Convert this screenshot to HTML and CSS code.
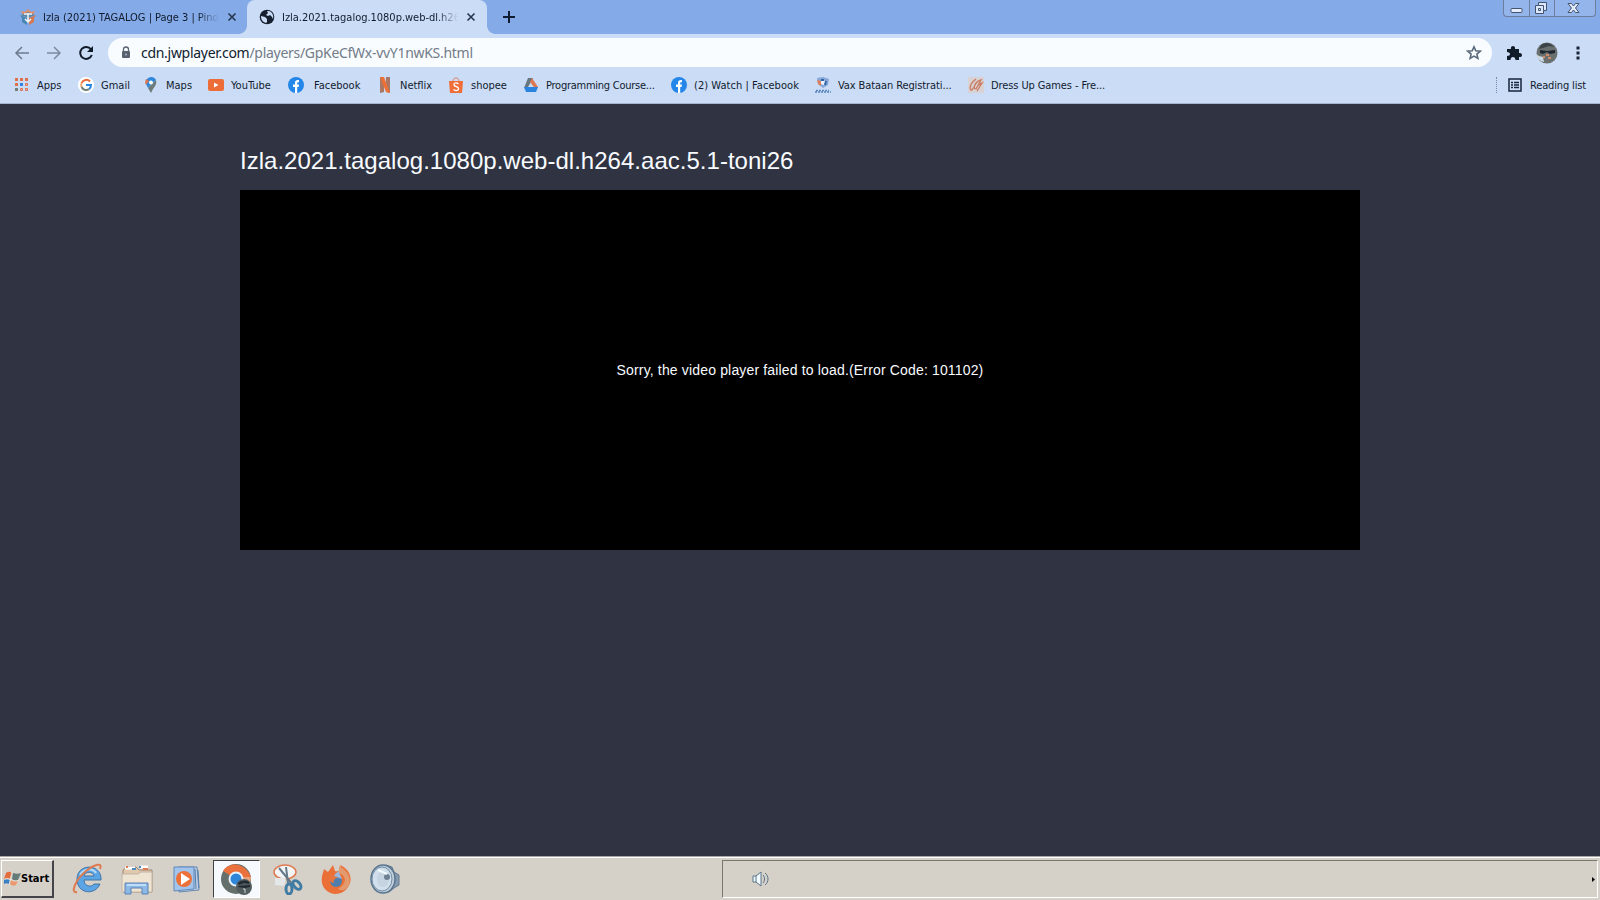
FILE: index.html
```html
<!DOCTYPE html>
<html lang="en">
<head>
    <meta charset="UTF-8">
    <title>Izla.2021.tagalog.1080p.web-dl.h264.aac.5.1-toni26</title>
    <link rel="stylesheet" href="styles.css">
</head>
<body>
    <div class="tabstrip">
        <div class="tab">
            <svg class="tab-icon" width="16" height="16" viewBox="0 0 16 16"><path d="M1 2l4 1 3-3 3 3 4-1-2 4H3z" fill="#e58b60"/><path d="M0 6l7 3v7l-5-3V9z" fill="#4687b3"/><path d="M16 6L9 9v7l5-3V9z" fill="#d57852"/><path d="M1 6l7-3 7 3-7 3z" fill="#5f87a6"/><path d="M4 5h8M8 4v9M5 10l3 3 3-3" stroke="#f1f3f5" stroke-width="1.500" fill="none"/></svg>
            <span class="tab-title">Izla (2021) TAGALOG | Page 3 | Pino</span>
            <svg class="close" width="10" height="10" viewBox="0 0 10 10"><path d="M1.500 1.500l7 7m0-7l-7 7" stroke="#26364f" stroke-width="1.600"/></svg>
        </div>
        <div class="tab active">
            <svg class="tab-icon" width="16" height="16" viewBox="0 0 16 16"><circle cx="8" cy="8" r="7.300" fill="#16202f"/><path d="M2 7l4 1 2 2v3l-1 1C4 13 2 11 2 7zM8 2l1 2-2 2 2 1 2-1 2 2 1 2c1-4-1-7-4-8z" fill="#cbdcf6"/></svg>
            <span class="tab-title">Izla.2021.tagalog.1080p.web-dl.h26</span>
            <svg class="close" width="10" height="10" viewBox="0 0 10 10"><path d="M1.500 1.500l7 7m0-7l-7 7" stroke="#26364f" stroke-width="1.600"/></svg>
        </div>
        <svg class="new-tab" width="12" height="12" viewBox="0 0 12 12"><path d="M6 0v12M0 6h12" stroke="#111c30" stroke-width="2"/></svg>
        <div class="window-buttons">
            <span><svg width="13" height="14" viewBox="0 0 13 14"><rect x="1" y="7.500" width="11" height="4" rx="1" fill="#e4edfb" stroke="#44546f"/></svg></span>
            <span><svg width="14" height="14" viewBox="0 0 14 14"><path d="M4.500 1.500h8v8h-3v3h-8v-8h3z" fill="#dce8fb" stroke="#44546f"/><path d="M4.500 4.500h5v5M4.500 7.500h2v2h-2z" fill="none" stroke="#44546f"/></svg></span>
            <span><svg width="13" height="14" viewBox="0 0 13 14"><path d="M1 2.500h3.500l2 2.500 2-2.500H12L8.500 7l3.500 4.500H8.500l-2-2.500-2 2.500H1L4.500 7z" fill="#e4edfb" stroke="#44546f"/></svg></span>
        </div>
    </div>

    <div class="toolbar">
        <svg class="back" width="16" height="16" viewBox="0 0 16 16"><path d="M15 8H2m6-6L2 8l6 6" fill="none" stroke="#6e7a8e" stroke-width="1.500"/></svg>
        <svg class="forward" width="16" height="16" viewBox="0 0 16 16"><path d="M1 8h13M8 2l6 6-6 6" fill="none" stroke="#7e8a9e" stroke-width="1.500"/></svg>
        <svg class="reload" width="16" height="16" viewBox="0 0 16 16"><path d="M13 4.300A6 6 0 1 0 13.800 10" fill="none" stroke="#101a28" stroke-width="2"/><path d="M15 1v6H9z" fill="#101a28"/></svg>
        <div class="address">
            <svg class="lock" width="10" height="13" viewBox="0 0 10 13"><path d="M2.500 6V3.500a2.500 2.500 0 0 1 5 0V6" fill="none" stroke="#59636f" stroke-width="1.300"/><rect x="1" y="5" width="8" height="7" rx="1" fill="#59636f"/><circle cx="5" cy="8.500" r="1" fill="#a9b2bd"/></svg>
            <span class="domain">cdn.jwplayer.com</span><span class="path">/players/GpKeCfWx-vvY1nwKS.html</span>
            <svg class="star" width="16" height="16" viewBox="0 0 16 16"><path d="M8 1.800l1.800 4 4.400.4-3.300 2.900 1 4.300L8 11.100l-3.900 2.300 1-4.300-3.300-2.900 4.400-.4z" fill="none" stroke="#59697c" stroke-width="1.600"/></svg>
        </div>
        <svg class="puzzle" width="16" height="16" viewBox="0 0 16 16"><path d="M1 4h4c-1-4 5-4 4 0h4v4c4-1 4 5 0 4v3H9.500c0-4-5-4-5 0H1v-4c4 0 4-4 0-4z" fill="#111c2b"/></svg>
        <svg class="avatar" width="22" height="22" viewBox="0 0 22 22"><circle cx="11" cy="11" r="10.500" fill="#69706f"/><path d="M5 3c4-3 9-3 13 2l-5-1-6 2-4 1z" fill="#3b4248"/><path d="M4 8l7 1 8-1v3l-5 1-3-2-4 2-3-1z" fill="#202833"/><path d="M0 12l3 2 4 1 1 5c-4-1-7-3-8-8z" fill="#cbd9e5"/><path d="M10 13h3m-1 3h3m-8-1h2" stroke="#d28b68" stroke-width="2"/></svg>
        <svg class="menu" width="4" height="14" viewBox="0 0 4 14"><path d="M.5 .5h3v3h-3zM.5 5.500h3v3h-3zM.5 10.500h3v3h-3z" fill="#182335"/></svg>
    </div>

    <div class="bookmarks">
        <div class="bookmark apps">
            <svg width="16" height="16" viewBox="0 0 16 16"><path d="M2 1h3v3H2zM7 1h3v3H7zM12 1h3v3h-3zM2 6h3v3H2z" fill="#df704b"/><path d="M7 6h3v3H7z" fill="#2f83df"/><path d="M12.500 6.500h2v2h-2zM7.500 11.500h2v2h-2zM12.500 11.500h2v2h-2z" fill="#e5c0ba" stroke="#df704b"/><path d="M2 11h3v3H2z" fill="#738078"/></svg>
            <span>Apps</span>
        </div>
        <div class="bookmark gmail">
            <svg width="16" height="16" viewBox="0 0 16 16"><circle cx="8" cy="8" r="8" fill="#fff"/><path d="M12 4.500A5 5 0 0 0 3.600 6" fill="none" stroke="#ed6b3b" stroke-width="2"/><path d="M3.600 6a5 5 0 0 0 0 4" fill="none" stroke="#efaa78" stroke-width="2"/><path d="M3.600 10a5 5 0 0 0 7.600 2" fill="none" stroke="#6f7e76" stroke-width="2"/><path d="M8 8h5c0 2-.5 3-1.800 4" fill="none" stroke="#2587e5" stroke-width="2"/></svg>
            <span>Gmail</span>
        </div>
        <div class="bookmark maps">
            <svg width="16" height="16" viewBox="0 0 16 16"><path d="M8 0a5.500 5.500 0 0 0-5 7l2 4 8-8A5.500 5.500 0 0 0 8 0z" fill="#2d87dd"/><path d="M13 3c1 4-1 6-3 9l-2 4-3-5z" fill="#6d7c78"/><path d="M3 2l3 2-3 4C2 6 2 4 3 2z" fill="#db7650"/><circle cx="8" cy="5.500" r="2" fill="#fff"/></svg>
            <span>Maps</span>
        </div>
        <div class="bookmark youtube">
            <svg width="16" height="16" viewBox="0 0 16 16"><rect y="2" width="16" height="12" rx="2" fill="#ed6d39"/><path d="M6 5.500l4.500 2.500L6 10.500z" fill="#fff"/></svg>
            <span>YouTube</span>
        </div>
        <div class="bookmark facebook">
            <svg width="16" height="16" viewBox="0 0 16 16"><circle cx="8" cy="8" r="8" fill="#2386e8"/><path d="M7 16v-6H5V7.500h2V6c0-2.300 1.500-3.200 4-2.800v2C9.600 5 9.200 5.400 9.200 6.300v1.200H11l-.4 2.500H9.200v6z" fill="#fff"/></svg>
            <span>Facebook</span>
        </div>
        <div class="bookmark netflix">
            <svg width="16" height="16" viewBox="0 0 16 16"><path d="M3 0h4v15l-4 1zM9 0h4v16l-4-1z" fill="#a87765"/><path d="M3 0h4l6 16-4-1z" fill="#ed7037"/></svg>
            <span>Netflix</span>
        </div>
        <div class="bookmark shopee">
            <svg width="16" height="16" viewBox="0 0 16 16"><path d="M1 4h14l-1 12H2z" fill="#ef6d38"/><path d="M5 4c0-4 6-4 6 0" fill="none" stroke="#e4805a"/><path d="M10.500 7C8 5 5.500 6 6 8s5 1.500 4.500 4c-.5 2-3 2-5 .5" fill="none" stroke="#fff" stroke-width="1.300"/></svg>
            <span>shopee</span>
        </div>
        <div class="bookmark programming">
            <svg width="16" height="16" viewBox="0 0 16 16"><path d="M5 1h5L4 12l-3-1z" fill="#67767f"/><path d="M9 1l6 9-2 3-6-8z" fill="#dc7951"/><path d="M1 10h14l-2 5H3z" fill="#2a83df"/><path d="M6 10l2-3 2 3z" fill="#cbdcf6"/></svg>
            <span>Programming Course...</span>
        </div>
        <div class="bookmark watch">
            <svg width="16" height="16" viewBox="0 0 16 16"><circle cx="8" cy="8" r="8" fill="#2386e8"/><path d="M7 16v-6H5V7.500h2V6c0-2.300 1.500-3.200 4-2.800v2C9.600 5 9.200 5.400 9.200 6.300v1.200H11l-.4 2.500H9.200v6z" fill="#fff"/></svg>
            <span>(2) Watch | Facebook</span>
        </div>
        <div class="bookmark vax">
            <svg width="16" height="16" viewBox="0 0 16 16"><path d="M2 1l6-1 6 2-1 6-5 3-5-4z" fill="#86a7d8"/><path d="M2 3l4 1v5L3 7z" fill="#dd7f5a"/><path d="M6 3l5 1-2 4-3-1z" fill="#eef4ff"/><path d="M6 3h3m2 1l-1 4" stroke="#2f66a5" stroke-width="2"/><path d="M1 13.500h13M0 15h16" stroke="#5b86c0" stroke-width="1.500" stroke-dasharray="2 1"/></svg>
            <span>Vax Bataan Registrati...</span>
        </div>
        <div class="bookmark dress">
            <svg width="16" height="16" viewBox="0 0 16 16"><path d="M0 0h16v16H0z" fill="#d8d2d4"/><path d="M8 2C0 8 2 14 4 13l5-8M8 12l5-9c-7 2-9 11-4 8m1-3l4-2-5 8" fill="none" stroke="#cc7e65" stroke-width="1.400"/></svg>
            <span>Dress Up Games - Fre...</span>
        </div>
        <div class="reading">
            <svg width="14" height="14" viewBox="0 0 14 14"><path d="M1 1h12v12H1z" fill="none" stroke="#17243a" stroke-width="1.500"/><path d="M3 4.500h2m1 0h5M3 7h2m1 0h5M3 9.500h2m1 0h5" stroke="#17243a" stroke-width="1.300"/></svg>
            <span>Reading list</span>
        </div>
    </div>

    <main class="page">
        <h1>Izla.2021.tagalog.1080p.web-dl.h264.aac.5.1-toni26</h1>
        <div class="player"><p>Sorry, the video player failed to load.(Error Code: 101102)</p></div>
    </main>

    <div class="taskbar">
        <div class="start">
            <svg width="17" height="15" viewBox="0 0 17 15"><path d="M2 2c2-2 4-1 6 0L6 8C4 7 2 7 0 8z" fill="#e46d40"/><path d="M9 2c3 1 5 1 8 0l-3 7c-2 1-4 1-6-1z" fill="#647b78"/><path d="M0 9c2-1 4-1 6 0l-1 4c-2-1-3-1-5 0z" fill="#397fc5"/><path d="M7 9c2 1 4 2 7 1l-2 4c-2 1-4 1-6-1z" fill="#eb9a70"/><path d="M8 1L5 14M1 8c5-2 8 4 14 1" stroke="#f5eee5" stroke-width=".7" fill="none"/></svg>
            <span>Start</span>
        </div>
        <div class="task">
            <svg width="32" height="32" viewBox="0 0 32 32"><path d="M29 17H12c0 6 7 8 10 4h6c-5 12-23 10-23-5 0-16 25-16 24 1zM12 13h10c-1-5-9-5-10 0z" fill="#5ba5e4" stroke="#4474a7"/><path d="M8 12c4-7 13-7 16-2" fill="none" stroke="#b6daf7" stroke-width="2"/><path d="M5 29C-2 31 3 17 14 8 23 1 31-1 28 6" fill="none" stroke="#de794f" stroke-width="2"/></svg>
        </div>
        <div class="task">
            <svg width="34" height="32" viewBox="0 0 34 32"><path d="M3 7l4-3h9l3 3h13v22H3z" fill="#dfc8ad" stroke="#a2846e"/><path d="M5 5h10m5-1h8" stroke="#fff" stroke-width="3"/><path d="M6 4h2m15 2h5" stroke="#df7950" stroke-width="2"/><path d="M12 6h4m3-2h2" stroke="#478ac0" stroke-width="2"/><path d="M2 11h16l3-2h11v20H2z" fill="#efe3d2" stroke="#c0b5a7"/><path d="M5 31V20h23v11h-6v-6H11v6z" fill="#8cb8e5" stroke="#5a83b6"/><path d="M7 22h19" stroke="#c1dcf7" stroke-width="2"/></svg>
        </div>
        <div class="task">
            <svg width="32" height="32" viewBox="0 0 32 32"><path d="M8 4h19l2 23-20 2z" fill="#bdd0e8" stroke="#6587ad"/><path d="M4 4h20v22l-20 2z" fill="#a2c4ec" stroke="#6189b9"/><path d="M25 6l1 20M28 7l1 18" stroke="#557ca8"/><circle cx="14" cy="16" r="8" fill="#ed7039"/><path d="M11 10l9 6-9 6z" fill="#fff"/></svg>
        </div>
        <div class="task selected">
            <svg width="33" height="33" viewBox="0 0 33 33"><circle cx="16" cy="16" r="15" fill="#65706d"/><path d="M16 16L3 8C9-2 25-1 31 14H16z" fill="#ea713d"/><path d="M20 14h11c0 7-4 12-9 16l-2-10z" fill="#e5a178"/><circle cx="16" cy="16" r="7.500" fill="#e7f1ff"/><circle cx="16" cy="16" r="5.500" fill="#2d86da"/><circle cx="24" cy="24" r="8" fill="#535c5f"/><path d="M18 20c4-3 8-3 11-1v2l-5-1-5 2zM18 23l12-1v2l-5 1-7-1z" fill="#222b32"/><path d="M23 26h2v4" fill="none" stroke="#c9d5df"/></svg>
        </div>
        <div class="task">
            <svg width="32" height="32" viewBox="0 0 32 32"><ellipse cx="14" cy="9" rx="11" ry="7" fill="#f2f4f6" stroke="#df7951" stroke-width="1.500"/><path d="M4 15h11l-2 8-9-1z" fill="#e4e7e8"/><path d="M8 5l14 17M15 4l2 16" stroke="#647988" stroke-width="2"/><ellipse cx="18" cy="26" rx="3" ry="5" fill="none" stroke="#407ba4" stroke-width="3"/><ellipse cx="26" cy="22" rx="3" ry="5" transform="rotate(-40 26 22)" fill="none" stroke="#407ba4" stroke-width="3"/></svg>
        </div>
        <div class="task">
            <svg width="32" height="32" viewBox="0 0 32 32"><path d="M4 6l4 3 5-7 2 6c4 1 7-2 5-6 9 4 12 12 10 18C25 35 5 34 2 20 1 13 3 11 4 6z" fill="#eb7038"/><path d="M19 3c8 4 13 12 10 19-3 6-8 6-11 4 9-5 9-13 1-16z" fill="#e49a6f"/><circle cx="16" cy="18" r="6" fill="#507fae"/><path d="M9 13c4-2 7-1 9 2-3 0-5 2-4 5-4 0-6-4-5-7z" fill="#e7753d"/><path d="M14 13c2-4 4-3 4-6l4 9z" fill="#9db8da"/></svg>
        </div>
        <div class="task">
            <svg width="32" height="32" viewBox="0 0 32 32"><path d="M17 2l6 2 2 5 5 3v10l-5 3-5 4h-6z" fill="#8499ae" stroke="#647a91"/><ellipse cx="14" cy="16" rx="12" ry="14" fill="#c0cfdb" stroke="#58748f" stroke-width="1.500"/><ellipse cx="13" cy="16" rx="10" ry="12" fill="#d0dfeb" stroke="#718ba2"/><ellipse cx="14" cy="16" rx="6" ry="8" fill="#c4d4e0"/><circle cx="18" cy="14" r="3" fill="#6e8192"/><path d="M9 7l9 4" stroke="#f4fbff" stroke-width="2"/></svg>
        </div>
        <div class="tray">
            <svg class="speaker" width="17" height="16" viewBox="0 0 17 16"><path d="M1 5h3l5-4v14l-5-4H1z" fill="#f2fbff" stroke="#597388"/><path d="M4 5v6M11 4c2 2 2 6 0 8M13 2c4 3 4 9 0 12" fill="none" stroke="#597388"/></svg>
            <svg class="more" width="3" height="5" viewBox="0 0 3 5"><path d="M0 0l3 2.500L0 5z"/></svg>
        </div>
    </div>
</body>
</html>
```
FILE: styles.css
```css
* {
    box-sizing: border-box;
}
body {
    margin: 0;
    height: 900px;
    overflow: hidden;
    display: flex;
    flex-direction: column;
    background-color: #303341;
    color: #111b2d;
    font-family: "DejaVu Sans Condensed", "DejaVu Sans", sans-serif;
    font-size: 11px;
}
svg {
    display: block;
    flex-shrink: 0;
}
.tabstrip {
    height: 34px;
    display: flex;
    flex-shrink: 0;
    background-color: #84aae7;
}
.tab {
    width: 247px;
    height: 34px;
    padding: 0 10px 0 20px;
    display: flex;
    align-items: center;
}
.tab.active {
    position: relative;
    width: 240px;
    padding: 0 11px 0 12px;
    background-color: #cbdcf6;
    border-radius: 8px 8px 0 0;
}
.tab.active::before,
.tab.active::after {
    content: "";
    position: absolute;
    bottom: 0;
    width: 8px;
    height: 8px;
}
.tab.active::before {
    left: -8px;
    background: radial-gradient(circle at 0 0, transparent 7.5px, #cbdcf6 8px);
}
.tab.active::after {
    right: -8px;
    background: radial-gradient(circle at 100% 0, transparent 7.5px, #cbdcf6 8px);
}
.tab-title {
    margin-left: 7px;
    width: 176px;
    overflow: hidden;
    white-space: nowrap;
    flex-shrink: 0;
    letter-spacing: -0.02px;
    mask-image: linear-gradient(to right, #000 155px, transparent 176px);
}
.close {
    margin-left: auto;
}
.new-tab {
    margin: 11px 0 0 16px;
}
.window-buttons {
    display: grid;
    grid-template-columns: 25px 25px 41px;
    width: 93px;
    height: 17px;
    margin-left: auto;
    margin-right: 4px;
    border: 1px solid #6c7e9c;
    border-top: 0;
    border-radius: 0 0 4px 4px;
    background-color: #93b5eb;
}
.window-buttons span {
    display: flex;
    justify-content: center;
    padding-top: 1px;
}
.window-buttons span + span {
    padding-right: 3px;
    border-left: 1px solid #6c7e9c;
}
.toolbar {
    height: 37px;
    display: flex;
    flex-shrink: 0;
    align-items: center;
    background-color: #cbdcf6;
}
.back {
    margin-left: 14px;
}
.forward {
    margin-left: 16px;
}
.reload {
    margin-left: 16px;
}
.address {
    width: 1384px;
    height: 29px;
    margin-left: 14px;
    padding: 0 10px 0 13px;
    display: flex;
    align-items: center;
    flex-shrink: 0;
    border-radius: 15px;
    background-color: #f8fcff;
    font-family: "Noto Sans", sans-serif;
    font-size: 14px;
    letter-spacing: -0.29px;
}
.domain {
    margin-left: 10px;
}
.path {
    color: #737b88;
}
.star {
    margin-left: auto;
}
.puzzle {
    margin-left: 14px;
}
.avatar {
    margin-left: 14px;
}
.menu {
    margin-left: 18px;
}
.bookmarks {
    height: 33px;
    padding: 0 15px 4px 13px;
    display: flex;
    align-items: center;
    flex-shrink: 0;
    background-color: #cbdcf6;
    border-bottom: 1px solid #a6b4ce;
    white-space: nowrap;
}
.bookmark {
    display: flex;
    align-items: center;
    gap: 7px;
    flex-shrink: 0;
}
.apps {
    width: 65px;
    gap: 8px;
}
.gmail {
    width: 65px;
}
.maps {
    width: 65px;
}
.youtube {
    width: 80px;
}
.facebook {
    width: 89px;
    gap: 10px;
}
.netflix {
    width: 71px;
}
.shopee {
    width: 75px;
}
.programming {
    width: 148px;
    letter-spacing: -0.25px;
}
.watch {
    width: 144px;
    letter-spacing: 0.05px;
}
.vax {
    width: 153px;
    letter-spacing: -0.1px;
}
.dress {
    width: 140px;
    letter-spacing: -0.1px;
}
.reading {
    height: 16px;
    width: 89px;
    display: flex;
    align-items: center;
    gap: 8px;
    margin-left: auto;
    padding-left: 11px;
    border-left: 1px dotted #7789a8;
    letter-spacing: -0.15px;
}
.page {
    flex: 1;
    width: 1120px;
    margin: 0 auto;
    padding-top: 43px;
    font-family: "Liberation Sans", Arial, sans-serif;
    color: #f8fbff;
}
.page h1 {
    margin: 0 0 15px;
    height: 28px;
    font-size: 24px;
    line-height: 28px;
    font-weight: normal;
    letter-spacing: 0.02px;
}
.player {
    height: 360px;
    display: flex;
    align-items: center;
    justify-content: center;
    background-color: #000;
}
.player p {
    margin: 0;
    font-size: 14px;
    letter-spacing: 0.16px;
}
.taskbar {
    height: 44px;
    padding: 3px 2px 2px 1px;
    display: flex;
    flex-shrink: 0;
    background-color: #d5d1c9;
    border-top: 1px solid #aaa7a4;
    box-shadow: inset 0 1px #fff;
}
.start {
    width: 53px;
    height: 38px;
    padding-left: 2px;
    display: flex;
    align-items: center;
    border: 1px solid #fff;
    border-right: 2px solid #44444a;
    border-bottom: 2px solid #44444a;
    font-size: 11px;
    font-weight: bold;
    color: #000;
}
.task {
    width: 47px;
    height: 38px;
    margin-left: 2px;
    display: flex;
    align-items: center;
    justify-content: center;
}
.start + .task {
    margin-left: 10px;
}
.selected {
    margin-left: 4px;
    border: 1px solid #3f4146;
    border-right: 1px solid #fff;
    border-bottom: 1px solid #fff;
    background-color: #f6faff;
}
.selected + .task {
    margin-left: 3px;
}
.tray {
    width: 876px;
    height: 38px;
    padding: 0 2px 0 29px;
    display: flex;
    align-items: center;
    margin-left: auto;
    border: 1px solid #77766f;
    border-right-color: #fff;
    border-bottom-color: #fff;
}
.more {
    margin-left: auto;
}
```
